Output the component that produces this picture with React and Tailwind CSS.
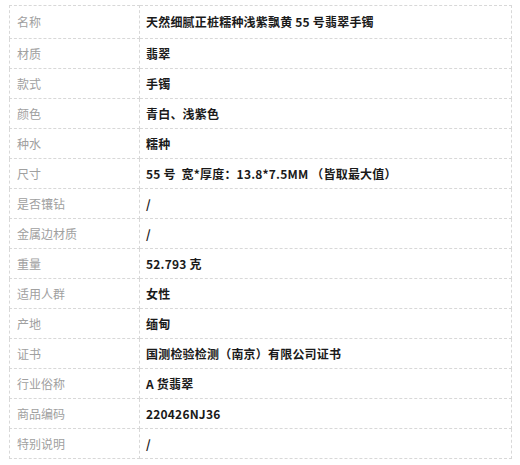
import React from 'react';

const rows = [
  ['名称', '天然细腻正桩糯种浅紫飘黄 55 号翡翠手镯'],
  ['材质', '翡翠'],
  ['款式', '手镯'],
  ['颜色', '青白、浅紫色'],
  ['种水', '糯种'],
  ['尺寸', '55 号  宽*厚度：13.8*7.5MM （皆取最大值）'],
  ['是否镶钻', '/'],
  ['金属边材质', '/'],
  ['重量', '52.793 克'],
  ['适用人群', '女性'],
  ['产地', '缅甸'],
  ['证书', '国测检验检测（南京）有限公司证书'],
  ['行业俗称', 'A 货翡翠'],
  ['商品编码', '220426NJ36'],
  ['特别说明', '/'],
];

export default function App() {
  return (
    <div
      className="w-[520px] h-[465px] bg-white pt-[5px] pl-[9px]"
      style={{ fontFamily: '"Microsoft YaHei", "Noto Sans CJK SC", sans-serif' }}
    >
      <table className="w-[503px] border-collapse table-fixed">
        <colgroup>
          <col className="w-[130px]" />
          <col />
        </colgroup>
        <tbody>
          {rows.map(([label, value], i) => (
            <tr key={label} className={i === 0 ? 'h-[33px]' : 'h-[30px]'}>
              <td className="border border-dashed border-[#d8d8d8] pl-[7px] text-[12px] text-[#a0a0a0] align-middle">
                {label}
              </td>
              <td className="border border-dashed border-[#d8d8d8] pl-[6px] text-[12px] font-bold text-[#1a1a1a] align-middle whitespace-pre tracking-[0.2px]">
                {value}
              </td>
            </tr>
          ))}
        </tbody>
      </table>
    </div>
  );
}
